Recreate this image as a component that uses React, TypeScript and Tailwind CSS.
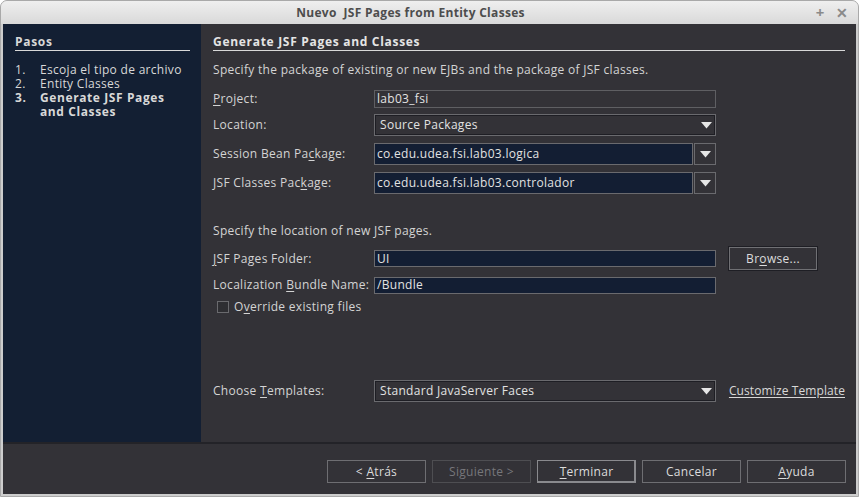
import React from 'react';

const font = { fontFamily: '"Open Sans", "Noto Sans", sans-serif' };

function U({ children }: { children: React.ReactNode }) {
  return <span className="underline underline-offset-2">{children}</span>;
}

function Arrow() {
  return (
    <svg width="11" height="7" viewBox="0 0 11 7">
      <polygon points="0,0 11,0 5.5,6.5" fill="#e6e6e6" />
    </svg>
  );
}

function Row({ label, h, mt, children }: { label: React.ReactNode; h: string; mt: string; children: React.ReactNode }) {
  return (
    <div className={`flex items-center ${h} ${mt}`}>
      <div className="w-[161px] shrink-0">{label}</div>
      {children}
    </div>
  );
}

function Combo({ value, editable }: { value: string; editable?: boolean }) {
  if (editable) {
    return (
      <div className="flex h-[22px] w-[342px]">
        <div className="flex-1 flex items-center pl-[2px] bg-[#131e33] border border-[#6a6a6e] text-[#e2e2e2]">{value}</div>
        <div className="w-[22px] flex items-center justify-center border border-[#6a6a6e] bg-[#333237] ml-[1px]">
          <Arrow />
        </div>
      </div>
    );
  }
  return (
    <div className="flex items-center justify-between h-[22px] w-[342px] border border-[#6a6a6e] bg-[#333237] pl-[5px] pr-[3px] shadow-[inset_0_0_0_1px_#1e1e24]">
      <span className="text-[#e2e2e2]">{value}</span>
      <Arrow />
    </div>
  );
}

function Btn({ children, disabled, primary }: { children: React.ReactNode; disabled?: boolean; primary?: boolean }) {
  return (
    <div
      className={`w-[99px] h-[23px] flex items-center justify-center bg-[#333237] border ${
        primary ? 'border-[#8a8a8e] shadow-[inset_0_-1px_0_#8a8a8e,inset_-1px_0_0_#8a8a8e]' : disabled ? 'border-[#4e4e52]' : 'border-[#6e6e72]'
      } ${disabled ? 'text-[#77777b]' : 'text-[#dcdcdc]'}`}>
      <span>{children}</span>
    </div>
  );
}

export default function App() {
  return (
    <div className="w-[859px] h-[497px] bg-white text-[12px] leading-none tracking-[0.3px]" style={font}>
      <div className="w-full h-full flex flex-col rounded-t-[7px] bg-[#cdcdcd] border border-[#a9a9a9] overflow-hidden">
        <div className="h-[23px] shrink-0 flex items-center relative bg-gradient-to-b from-[#efefef] to-[#d9d9d9]">
          <div className="flex-1 text-center font-bold text-[#4d4d4d] text-[12px] pr-[38px] pt-[1px]">Nuevo&nbsp; JSF Pages from Entity Classes</div>
          <div className="absolute right-[10px] top-[4px] flex items-center gap-[11px] text-[#8a8a8a] font-bold">
            <span className="text-[15px]">+</span>
            <span className="text-[14px]">✕</span>
          </div>
        </div>
        <div className="flex-1 flex flex-col mx-[2px] mb-[2px]">
          <div className="flex h-[418px]">
            <div className="w-[198px] bg-[#131f33] px-[12px] text-[#d8d8d8]">
              <div className="mt-[12px] h-[15px] border-b border-[#d8d8d8] font-bold tracking-[0.7px] w-[175px]">Pasos</div>
              <div className="mt-[12px] leading-[14px]">
                <div className="flex"><span className="w-[25px]">1.</span><span>Escoja el tipo de archivo</span></div>
                <div className="flex"><span className="w-[25px]">2.</span><span>Entity Classes</span></div>
                <div className="flex font-bold tracking-[0.6px]"><span className="w-[25px]">3.</span><span className="w-[135px]">Generate JSF Pages and Classes</span></div>
              </div>
            </div>
            <div className="flex-1 bg-[#333237] pl-[12px] pr-[11px] text-[#d4d4d4]">
              <div className="mt-[12px] h-[15px] border-b border-[#d8d8d8] font-bold tracking-[0.7px] text-[#e4e4e4]">Generate JSF Pages and Classes</div>
              <div className="mt-[11px] h-[16px] flex items-center">Specify the package of existing or new EJBs and the package of JSF classes.</div>
              <Row label={<><U>P</U>roject:</>} h="h-[19px]" mt="mt-[11px]">
                <div className="h-[18px] w-[342px] flex items-center pl-[2px] border border-[#5f5f63] text-[#e2e2e2]">lab03_fsi</div>
              </Row>
              <Row label="Location:" h="h-[22px]" mt="mt-[6px]">
                <Combo value="Source Packages" />
              </Row>
              <Row label={<>Session Bean Pa<U>c</U>kage:</>} h="h-[22px]" mt="mt-[7px]">
                <Combo value="co.edu.udea.fsi.lab03.logica" editable />
              </Row>
              <Row label={<>JSF Classes Pac<U>k</U>age:</>} h="h-[22px]" mt="mt-[7px]">
                <Combo value="co.edu.udea.fsi.lab03.controlador" editable />
              </Row>
              <div className="mt-[29px] h-[16px] flex items-center">Specify the location of new JSF pages.</div>
              <Row label={<><U>J</U>SF Pages Folder:</>} h="h-[23px]" mt="mt-[8px]">
                <div className="h-[17px] w-[342px] flex items-center pl-[2px] bg-[#131e33] border border-[#6a6a6e] text-[#e2e2e2]">UI</div>
                <div className="ml-[13px] w-[88px] h-[23px] flex items-center justify-center border border-[#707074] shadow-[0_0_0_1px_#1e1e24] text-[#dcdcdc]">
                  <span>Br<U>o</U>wse...</span>
                </div>
              </Row>
              <Row label={<>Localization <U>B</U>undle Name:</>} h="h-[18px]" mt="mt-[6px]">
                <div className="h-[17px] w-[342px] flex items-center pl-[2px] bg-[#131e33] border border-[#6a6a6e] text-[#e2e2e2]">/Bundle</div>
              </Row>
              <div className="mt-[6px] h-[14px] flex items-center pl-[4px]">
                <div className="w-[12px] h-[12px] border border-[#6a6a6e] bg-[#2e2e32]" />
                <span className="ml-[5px]">O<U>v</U>erride existing files</span>
              </div>
              <Row label={<>Choose <U>T</U>emplates:</>} h="h-[22px]" mt="mt-[66px]">
                <Combo value="Standard JavaServer Faces" />
                <span className="ml-[13px] underline underline-offset-2 text-[#d8d8d8] tracking-[0.1px]">Customize Template</span>
              </Row>
            </div>
          </div>
          <div className="h-[2px] bg-[#232328]" />
          <div className="flex-1 bg-[#333237] flex items-start justify-end pt-[16px] pr-[10px] gap-[6px] text-[#dcdcdc]">
            <Btn>&lt; <U>A</U>trás</Btn>
            <Btn disabled>Siguiente &gt;</Btn>
            <Btn primary><U>T</U>erminar</Btn>
            <Btn>Cancelar</Btn>
            <Btn><U>A</U>yuda</Btn>
          </div>
        </div>
      </div>
    </div>
  );
}
